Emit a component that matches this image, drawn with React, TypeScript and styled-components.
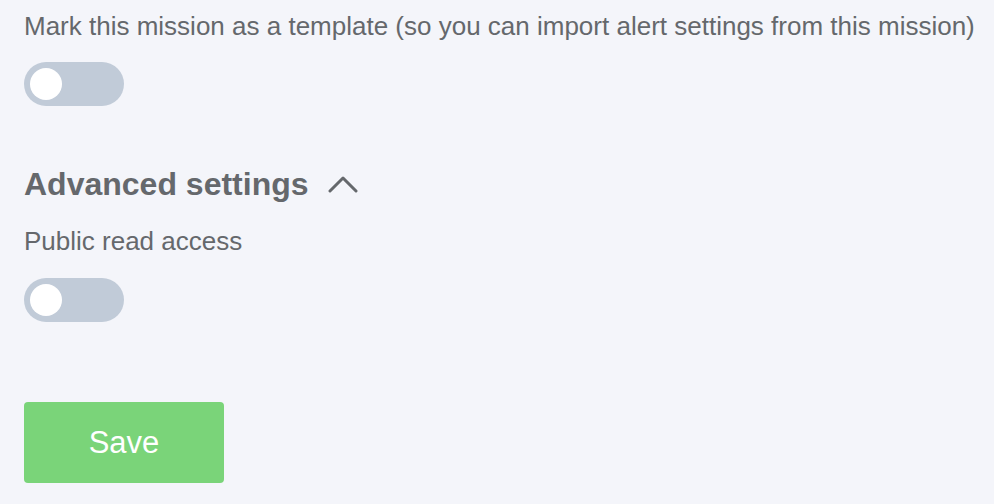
import React from 'react';
import styled, { createGlobalStyle } from 'styled-components';

const GlobalStyle = createGlobalStyle`
  html, body {
    margin: 0;
    padding: 0;
    background: #f4f5fa;
  }
  body {
    font-family: 'Liberation Sans', Arial, Helvetica, sans-serif;
    color: #65686c;
  }
`;

const Page = styled.div`
  display: flex;
  flex-direction: column;
  align-items: flex-start;
  padding: 8px 24px 0;
`;

const Label = styled.div`
  font-size: 26px;
  line-height: 36px;
  white-space: nowrap;
`;

const Switch = styled.button<{ $on?: boolean; $gap: number }>`
  position: relative;
  width: 100px;
  height: 44px;
  margin-top: ${(p) => p.$gap}px;
  border: 0;
  border-radius: 22px;
  background: ${(p) => (p.$on ? '#7ad479' : '#c1cbd8')};
  cursor: pointer;
  padding: 0;

  &::after {
    content: '';
    position: absolute;
    top: 6px;
    left: ${(p) => (p.$on ? '62px' : '6px')};
    width: 32px;
    height: 32px;
    border-radius: 50%;
    background: #fff;
  }
`;

const SectionHeader = styled.div`
  display: flex;
  align-items: center;
  gap: 19px;
  margin-top: 58px;
  margin-bottom: 19px;
  font-size: 32px;
  font-weight: 700;
  line-height: 40px;
  cursor: pointer;
`;

const SaveButton = styled.button`
  margin-top: 80px;
  width: 200px;
  height: 81px;
  border: 0;
  border-radius: 4px;
  background: #7ad479;
  color: #fff;
  font-family: 'Liberation Sans', Arial, Helvetica, sans-serif;
  font-size: 31px;
  cursor: pointer;
`;

const Chevron = () => (
  <svg width="30" height="20" viewBox="0 0 30 20" fill="none">
    <path d="M2 17 L15 4 L28 17" stroke="#65686c" strokeWidth="3" strokeLinecap="round" strokeLinejoin="round" />
  </svg>
);

const App: React.FC = () => {
  return (
    <>
      <GlobalStyle />
      <Page>
        <Label>Mark this mission as a template (so you can import alert settings from this mission)</Label>
        <Switch $gap={18} />
        <SectionHeader>
          <span>Advanced settings</span>
          <Chevron />
        </SectionHeader>
        <Label>Public read access</Label>
        <Switch $gap={19} />
        <SaveButton>Save</SaveButton>
      </Page>
    </>
  );
};

export default App;
